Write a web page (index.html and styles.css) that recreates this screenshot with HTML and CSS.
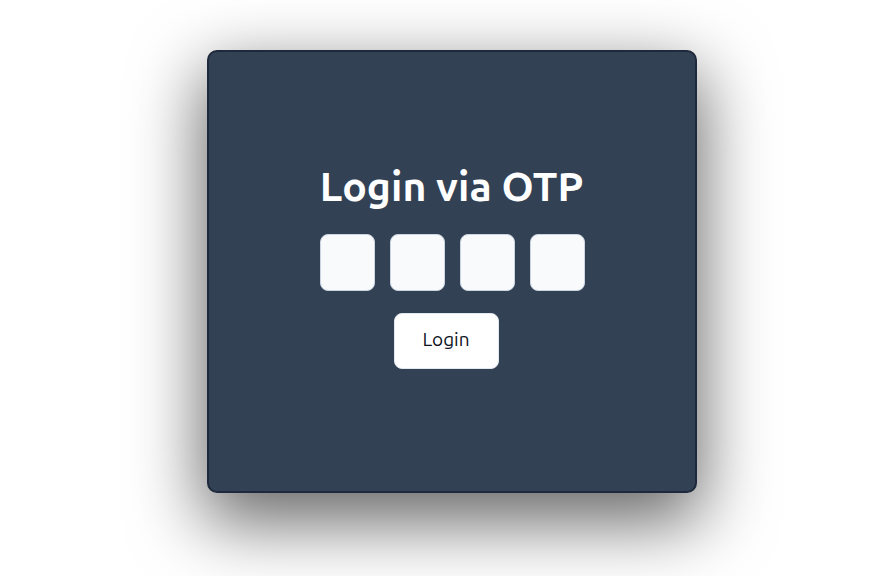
FILE: index.html
```html
<!DOCTYPE html>
<html lang="en">
<head>
<meta charset="utf-8">
<title>Login via OTP</title>
<link rel="stylesheet" href="styles.css">
</head>
<body>
<main class="page">
  <section class="card">
    <h1 class="title">Login via OTP</h1>
    <div class="otp">
      <input class="digit" type="text" maxlength="1">
      <input class="digit" type="text" maxlength="1">
      <input class="digit" type="text" maxlength="1">
      <input class="digit" type="text" maxlength="1">
    </div>
    <button class="btn" type="button">Login</button>
  </section>
</main>
</body>
</html>
```
FILE: styles.css
```css
* { box-sizing: border-box; }
html, body { margin: 0; padding: 0; background: #ffffff; }
body { font-family: "Ubuntu", "Open Sans", "Noto Sans", sans-serif; }
.page {
  display: flex;
  padding: 50px 0 0 207px;
  min-height: 576px;
}
.card {
  width: 490px;
  height: 443px;
  background: #334155;
  border: 2px solid #1e293b;
  border-radius: 10px;
  box-shadow: rgba(0, 0, 0, 0.6) 0px 25px 70px 4px;
  display: flex;
  flex-direction: column;
  align-items: center;
  padding-top: 110px;
}
.title {
  margin: 0 0 0 -1px;
  color: #ffffff;
  font-size: 41px;
  font-weight: 700;
  line-height: 48px;
}
.otp {
  display: flex;
  gap: 15px;
  margin: 24px 0 0 0;
}
.digit {
  width: 55px;
  height: 57px;
  background: #f8fafc;
  border: 1px solid #cbd5e1;
  border-radius: 8px;
  padding: 0;
  font: inherit;
}
.btn {
  margin: 22px 12px 0 0;
  width: 105px;
  height: 56px;
  padding: 0 0 4px;
  background: #ffffff;
  border: 1px solid #e2e8f0;
  border-radius: 8px;
  font-family: inherit;
  font-size: 19px;
  color: #0b1220;
}
```
